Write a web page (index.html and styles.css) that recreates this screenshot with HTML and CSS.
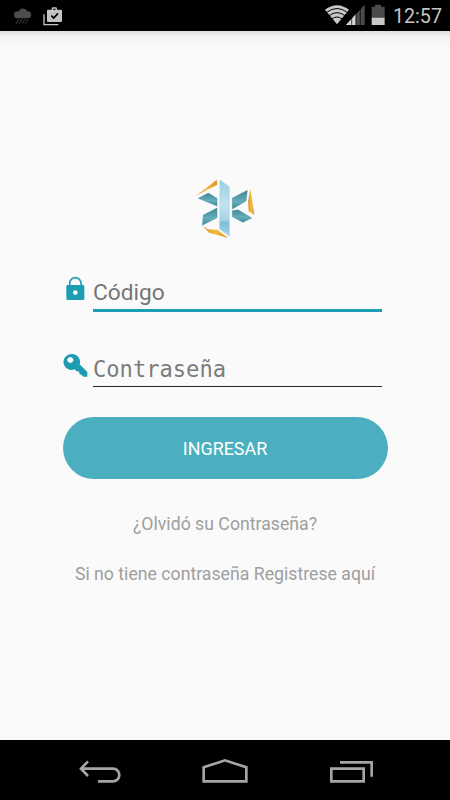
FILE: index.html
```html
<!DOCTYPE html>
<html lang="es">
<head>
    <meta charset="UTF-8">
    <meta name="viewport" content="width=device-width, initial-scale=1.0">
    <title>Ingresar</title>
    <link rel="stylesheet" href="styles.css">
</head>
<body>
    <div class="phone">
        <header class="status">
            <div class="status-left">
                <svg width="18" height="17" viewBox="0 0 54 51">
                    <path fill="#4c4c4c" d="M11 31a10.500 10.500 0 0 1-1-21q3 0 4 1A14 14 0 0 1 40 10a10.500 10.500 0 0 1 2 21z"/>
                    <path stroke="#5c5c5c" stroke-width="3" stroke-dasharray="5 2" d="M15 34l-9 13M24 34l-9 13M33 34l-9 13M42 34l-9 13"/>
                </svg>
                <svg width="20" height="20" viewBox="0 0 60 60">
                    <path fill="none" stroke="#c4c4c4" stroke-width="4" d="M3 22v31h43"/>
                    <path fill="none" stroke="#c4c4c4" stroke-width="4" d="M28 9V5q0-2 2-2h8q2 0 2 2v4"/>
                    <rect x="12" y="8" width="45" height="37" rx="3" fill="#c4c4c4"/>
                    <path fill="none" stroke="#000" stroke-width="5" d="M25 26l7 7 13-14"/>
                </svg>
            </div>
            <div class="status-right">
                <svg width="61" height="23" viewBox="0 0 183 69">
                    <path fill="#c8c8c8" d="M0 20Q36-7 72 20L36 64z"/>
                    <path fill="none" stroke="#000" stroke-width="3" d="M5 28q31-23 62 0M12 38q24-18 48 0M20 48q16-12 32 0"/>
                    <path fill="#4a4a4a" d="M119 5v61H63z"/>
                    <path fill="#d6d6d6" d="M92 34v32H63z"/>
                    <path stroke="#000" stroke-width="2" d="M80 20v46M93 20v46M106 10v56"/>
                    <path fill="#4a4a4a" d="M140 11h10V5h18v6h11v33h-39z"/>
                    <path fill="#c8c8c8" d="M140 44h39v22h-39z"/>
                </svg>
                <span class="clock">12:57</span>
            </div>
        </header>

        <main class="screen">
            <svg class="logo" width="80" height="76" viewBox="0 0 240 228">
                <defs>
                    <linearGradient id="bar" x1="0" y1="0" x2="0" y2="1">
                        <stop offset="0" stop-color="#9ad0e2"/>
                        <stop offset=".45" stop-color="#c1e4ef"/>
                        <stop offset=".72" stop-color="#a3d3e5"/>
                        <stop offset=".76" stop-color="#7fbdd6"/>
                        <stop offset="1" stop-color="#a8d7e7"/>
                    </linearGradient>
                    <linearGradient id="leaf" x1="0" y1="0" x2="0" y2="1">
                        <stop offset="0" stop-color="#418897"/>
                        <stop offset=".6" stop-color="#64adba"/>
                        <stop offset="1" stop-color="#3e8798"/>
                    </linearGradient>
                    <linearGradient id="gold" x1="0" y1="0" x2="1" y2="0">
                        <stop offset="0" stop-color="#d99431"/>
                        <stop offset=".5" stop-color="#f7bc3c"/>
                        <stop offset="1" stop-color="#dc8e21"/>
                    </linearGradient>
                </defs>
                <path fill="url(#bar)" stroke="#88bdd0" d="M105 30l28 21v147l-29-21z"/>
                <g fill="url(#leaf)" stroke="#347c8b">
                    <path d="M40 85l30-16 26 16v23z"/>
                    <path d="M96 114v29l-44 23 3-31z"/>
                    <path d="M142 84l45-23-4 32-41 24z"/>
                    <path d="M142 122l17-3 41 25-26 13-32-17z"/>
                </g>
                <g fill="url(#gold)">
                    <path d="M34 77L95 29l2 15-33 17z"/>
                    <path d="M196 56l12 79-17-11-2-30z"/>
                    <path d="M53 167l16 11 27 1 34 25-58-16z"/>
                </g>
            </svg>

            <form class="login">
                <label class="field focused">
                    <svg class="icon" width="26" height="28" viewBox="0 0 78 84">
                        <path fill="none" stroke="#1c9db2" stroke-width="5" d="M20 31V22a17 17 0 0 1 34 0v9"/>
                        <path fill="#1c9db2" fill-rule="evenodd" d="M14 27h46q4 0 4 4v37q0 4-4 4H14q-4 0-4-4V31q0-4 4-4zM37 43a7 7 0 1 0 .1 0z"/>
                    </svg>
                    <span class="input">Código</span>
                </label>
                <label class="field">
                    <svg class="icon" width="26" height="28" viewBox="0 0 78 84">
                        <path fill="#1c9db2" fill-rule="evenodd" d="M26 9a24 24 0 1 0 9 46l5 5 8 2 2 8 6 2 5 5h12V63L50 40A24 24 0 0 0 26 9zM22 18a9 9 0 1 1-.1 0z"/>
                    </svg>
                    <span class="input mono">Contraseña</span>
                </label>
                <button type="button" class="btn">INGRESAR</button>
            </form>

            <a class="link">¿Olvidó su Contraseña?</a>
            <a class="link register">Si no tiene contraseña Registrese aquí</a>
        </main>

        <nav class="navbar">
            <svg width="340" height="60" viewBox="0 0 1020 180" fill="none" stroke="#a5a5a5" stroke-width="8">
                <path d="M64 86h95a19 19 0 0 1 0 38h-45M84 64L63 86l21 22"/>
                <path d="M431 124V82l64-21 64 21v42z"/>
                <path d="M814 86h97v38h-97zM840 67h95v43"/>
            </svg>
        </nav>
    </div>
</body>
</html>
```
FILE: styles.css
```css
*{
    margin: 0;
    padding: 0;
    box-sizing: border-box;
}
body{
    font-family: Roboto, "Noto Sans", sans-serif;
    background-color: #fafafa;
}
svg{
    display: block;
}
.phone{
    width: 450px;
    height: 800px;
    display: flex;
    flex-direction: column;
    overflow: hidden;
}
/* barra de estado */
.status{
    height: 31px;
    background-color: #000;
    display: flex;
    justify-content: space-between;
    padding: 0 8px 0 14px;
}
.status-left{
    display: flex;
    gap: 11px;
    padding-top: 7px;
}
.status-left svg:first-child{
    margin-top: 1px;
}
.status-right{
    display: flex;
    gap: 7px;
}
.status-right svg{
    margin-top: 3px;
}
.clock{
    color: #c4c4c4;
    font-size: 19.7px;
    line-height: 34px;
}
/* contenido */
.screen{
    flex: 1;
    display: flex;
    flex-direction: column;
    align-items: center;
    padding-top: 139px;
    background: linear-gradient(#dedede, #f2f2f2 6px, #fafafa 16px);
}
.logo{
    margin-right: 1px;
}
.login{
    width: 326px;
    margin-top: 28px;
}
.field{
    display: flex;
    height: 38px;
    margin-bottom: 37px;
    padding-left: 1px;
}
.icon{
    margin-top: 2px;
    flex: none;
}
.input{
    width: 289px;
    height: 38px;
    margin-left: 4px;
    font-size: 22.7px;
    line-height: 38px;
    color: #757575;
    border-bottom: 1px solid #2b2b2b;
}
.focused .input{
    border-bottom: 3px solid #1c9fb4;
}
.input.mono{
    font-family: "DejaVu Sans Mono", monospace;
    font-size: 22.1px;
    line-height: 41px;
    color: #7c7c7c;
}
.btn{
    display: block;
    width: 325px;
    height: 62px;
    margin-top: -7px;
    margin-left: .5px;
    border: none;
    border-radius: 31px;
    background-color: #4cafc0;
    color: #fff;
    font-family: inherit;
    font-size: 17.9px;
}
.link{
    margin-top: 34px;
    font-size: 17.7px;
    line-height: 22px;
    color: #9e9e9e;
}
.register{
    margin-top: 28px;
}
/* botones del sistema */
.navbar{
    height: 60px;
    background-color: #000;
    padding-left: 60px;
}
```
